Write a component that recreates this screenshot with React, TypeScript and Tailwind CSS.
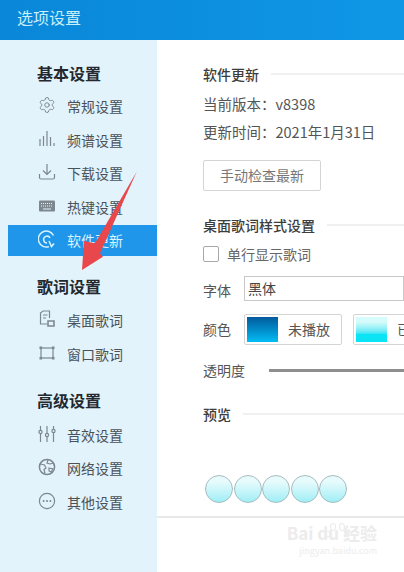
import { ReactNode } from "react";
import { Settings } from "lucide-react";

const font = { fontFamily: '"Noto Sans CJK SC", "Noto Sans", sans-serif' };

function Icon({ children }: { children: ReactNode }) {
  return (
    <svg width="18" height="18" viewBox="0 0 18 18" fill="none" stroke="currentColor" strokeWidth="1.2" className="shrink-0">
      {children}
    </svg>
  );
}

const icons: Record<string, ReactNode> = {
  bars: <path d="M2 9v7M5.5 6v10M9 1v15M12.5 7v9M16 13v3" />,
  download: <path d="M9 1v10M5 7.5l4 4 4-4M1.5 11v3.5q0 1.5 1.5 1.5h12q1.5 0 1.5-1.5V11" />,
  keyboard: (
    <>
      <rect x="1" y="3.5" width="16" height="11" rx="1" fill="currentColor" stroke="none" />
      <path d="M3 6.5h12M3 9h12" stroke="#e3f3fb" strokeWidth="1" strokeDasharray="1 1" />
      <path d="M5 12h8" stroke="#e3f3fb" strokeWidth="1" />
    </>
  ),
  refresh: (
    <>
      <path d="M15.5 5.5A8 8 0 1 0 11 16.6" strokeWidth="1.5" />
      <path d="M12 8a3.4 3.4 0 1 0-3 5" strokeWidth="1.5" />
      <path d="M11 11l2.5 5.5 2.5-3" strokeWidth="1.5" />
    </>
  ),
  desk: (
    <>
      <path d="M9 14H2.5V3L5 1h6.5v7" />
      <path d="M5 5h4.5M5 8h3" />
      <path d="M10 11h6v5h-6z" strokeWidth="1.6" />
    </>
  ),
  frame: (
    <>
      <rect x="3" y="4" width="12" height="10" />
      <g fill="currentColor" stroke="none">
        <rect x="1.5" y="2.5" width="2.6" height="2.6" />
        <rect x="13.9" y="2.5" width="2.6" height="2.6" />
        <rect x="1.5" y="12.9" width="2.6" height="2.6" />
        <rect x="13.9" y="12.9" width="2.6" height="2.6" />
      </g>
    </>
  ),
  sliders: (
    <>
      <path d="M2.5 1v16M9 1v16M15.5 1v16" />
      <g fill="#e3f3fb">
        <circle cx="2.5" cy="7" r="1.6" />
        <circle cx="9" cy="10" r="1.6" />
        <circle cx="15.5" cy="6" r="1.6" />
      </g>
    </>
  ),
  globe: (
    <>
      <circle cx="9" cy="9" r="7.6" strokeWidth="1.5" />
      <path d="M2.5 6l4 1 1.5 3-2 1.5 1 4M10 2l-1 3 3 1 4-1M11 10l4 1-2 3-2-1z" />
    </>
  ),
  more: (
    <>
      <circle cx="9" cy="9" r="7.6" />
      <g fill="currentColor" stroke="none">
        <circle cx="5.6" cy="9" r="1" />
        <circle cx="9" cy="9" r="1" />
        <circle cx="12.4" cy="9" r="1" />
      </g>
    </>
  ),
};

function NavItem({ icon, label, active }: { icon: string; label: string; active?: boolean }) {
  return (
    <div
      className={`flex h-[31px] items-center gap-[11px] pl-[30px] text-[14px] mb-[2.5px] ${
        active ? "bg-[#2096ea] text-[#d9f3ff]" : "text-[#4a5258]"
      }`}
    >
      <span className={`-mt-[3px] ${active ? "text-[#d9f3ff]" : "text-[#7d8790]"}`}>
        {icon === "gear" ? <Settings size={18} strokeWidth={1.3} /> : <Icon>{icons[icon]}</Icon>}
      </span>
      {label}
    </div>
  );
}

function SectionTitle({ children }: { children: ReactNode }) {
  return <div className="pl-[29px] text-[16px] font-bold leading-[24px] text-[#23292e]">{children}</div>;
}

function GroupTitle({ label }: { label: string }) {
  return (
    <div className="flex items-center gap-[12px]">
      <span className="text-[14px] font-medium leading-[20px] text-[#3d3d3d]">{label}</span>
      <span className="h-[2px] flex-1 bg-[#f0f0f0]" />
    </div>
  );
}

function ColorButton({ gradient, label }: { gradient: string; label: string }) {
  return (
    <div className="flex h-[31px] w-[98px] shrink-0 items-center gap-[10px] rounded-[2px] border border-[#d4d4d4] pl-[2px]">
      <div className={`h-[25px] w-[31px] shrink-0 ${gradient}`} />
      <span className="whitespace-nowrap text-[14px] text-[#555]">{label}</span>
    </div>
  );
}

export default function App() {
  return (
    <div className="relative flex h-[572px] w-[404px] flex-col overflow-hidden bg-white" style={font}>
      <div className="flex h-[40px] shrink-0 items-center bg-gradient-to-r from-[#0a87d8] to-[#0f97e6] pb-[6px] pl-[17px] text-[16px] text-[#c9effa]">
        选项设置
      </div>
      <div className="flex min-h-0 flex-1">
        <aside className="w-[157px] shrink-0 bg-[#e3f3fb] pl-[8px] pt-[21px]">
          <SectionTitle>基本设置</SectionTitle>
          <div className="mt-[6px]">
            <NavItem icon="gear" label="常规设置" />
            <NavItem icon="bars" label="频谱设置" />
            <NavItem icon="download" label="下载设置" />
            <NavItem icon="keyboard" label="热键设置" />
            <NavItem icon="refresh" label="软件更新" active />
          </div>
          <div className="mt-[18px]">
            <SectionTitle>歌词设置</SectionTitle>
          </div>
          <div className="mt-[7px]">
            <NavItem icon="desk" label="桌面歌词" />
            <NavItem icon="frame" label="窗口歌词" />
          </div>
          <div className="mt-[18px]">
            <SectionTitle>高级设置</SectionTitle>
          </div>
          <div className="mt-[8px]">
            <NavItem icon="sliders" label="音效设置" />
            <NavItem icon="globe" label="网络设置" />
            <NavItem icon="more" label="其他设置" />
          </div>
        </aside>

        <main className="flex min-w-0 flex-1 flex-col">
          <div className="h-[476px] shrink-0 pl-[46px] pt-[24px]">
            <GroupTitle label="软件更新" />
            <div className="mt-[10px] whitespace-nowrap text-[14.5px] leading-[20px] text-[#555]">当前版本：v8398</div>
            <div className="mt-[8px] whitespace-nowrap text-[14.5px] leading-[20px] text-[#555]">更新时间：2021年1月31日</div>
            <div className="mt-[18px] flex h-[31px] w-[118px] items-center justify-center rounded-[2px] border border-[#d4d4d4] text-[14px] text-[#777]">
              手动检查最新
            </div>
            <div className="mt-[24px]">
              <GroupTitle label="桌面歌词样式设置" />
            </div>
            <div className="mt-[9px] flex items-center gap-[8px]">
              <div className="size-[16px] rounded-[2px] border border-[#a8a8a8]" />
              <span className="text-[14px] leading-[20px] text-[#666]">单行显示歌词</span>
            </div>
            <div className="mt-[12px] flex items-center gap-[13px]">
              <span className="mt-[3px] text-[14px] text-[#555]">字体</span>
              <div className="flex h-[25px] flex-1 items-center border border-[#c8c8c8] pl-[3px] text-[14px] text-[#444]">黑体</div>
            </div>
            <div className="mt-[13px] flex items-center gap-[11px] overflow-hidden">
              <span className="mr-[2px] shrink-0 text-[14px] text-[#555]">颜色</span>
              <ColorButton gradient="bg-gradient-to-b from-[#045a9c] to-[#03bdf5]" label="未播放" />
              <ColorButton gradient="bg-gradient-to-b from-[#d5fbfb] from-20% to-[#0ae4f4] to-70%" label="已播放" />
            </div>
            <div className="mt-[15px] flex items-center gap-[24px]">
              <span className="shrink-0 text-[14px] leading-[20px] text-[#555]">透明度</span>
              <span className="h-[3px] flex-1 bg-[#8e8e8e]" />
            </div>
            <div className="mt-[24px]">
              <GroupTitle label="预览" />
            </div>
            <div className="mt-[51px] flex pl-[2px]">
              {[0, 1, 2, 3, 4].map((i) => (
                <div
                  key={i}
                  className="mr-[0.5px] size-[28px] rounded-full border border-[#a6bcc0] bg-gradient-to-b from-[#e8fbfc] from-20% to-[#9eeef6]"
                />
              ))}
            </div>
          </div>
          <div className="h-[2px] shrink-0 bg-[#e8e8e8]" />
          <div className="flex flex-1 flex-col items-end pr-[27px] pt-[4px] text-[#ececec]">
            <div className="whitespace-nowrap text-[17px] font-bold leading-[22px]">Bai du 经验</div>
            <div className="whitespace-nowrap text-[9px] leading-[14px]">jingyan.baidu.com</div>
          </div>
        </main>
      </div>

      {/* annotation arrow + watermark paw */}
      <svg className="pointer-events-none absolute left-0 top-0" width="404" height="572" viewBox="0 0 404 572">
        <path d="M136.7 171.7L95 243.3L84 241L82 270L103 256.7L100 253.3Z" fill="#e8474c" />
        <g fill="none" stroke="#ececec" strokeWidth="1.2">
          <ellipse cx="333" cy="527" rx="2.5" ry="3.5" />
          <ellipse cx="342" cy="527" rx="2.5" ry="3.5" />
          <ellipse cx="328" cy="534" rx="2" ry="3" />
          <ellipse cx="347" cy="534" rx="2" ry="3" />
        </g>
      </svg>
    </div>
  );
}
